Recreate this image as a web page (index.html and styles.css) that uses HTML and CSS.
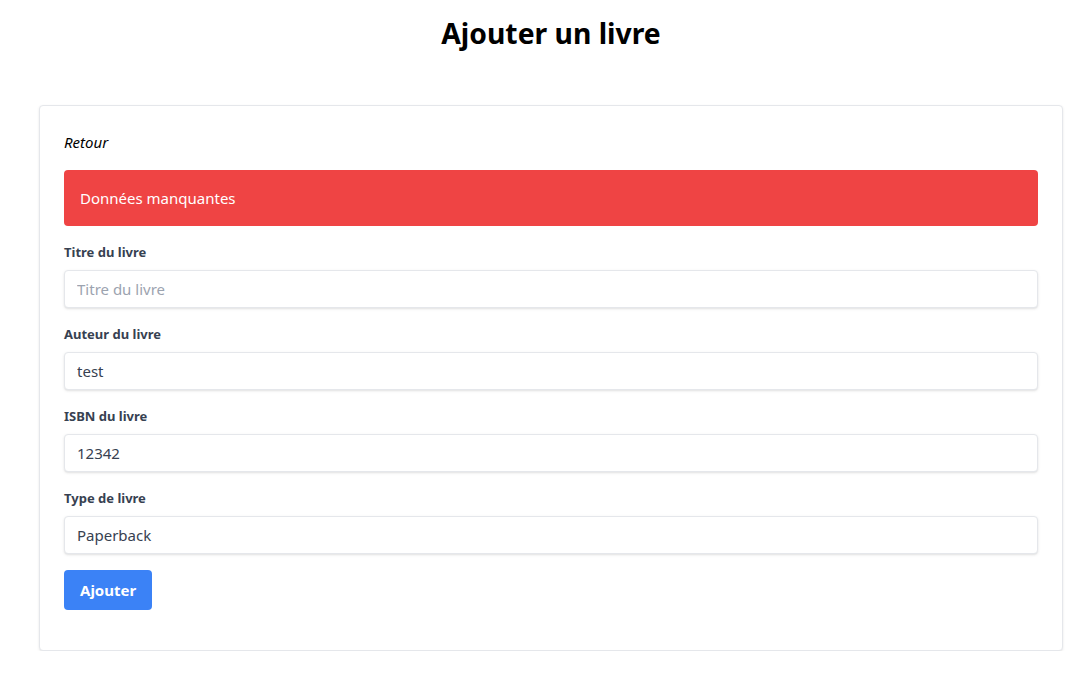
FILE: index.html
```html
<!DOCTYPE html>
<html lang="fr">
<head>
<meta charset="utf-8">
<title>Ajouter un livre</title>
<link rel="stylesheet" href="styles.css">
</head>
<body>
<div class="page">
  <h1 class="title">Ajouter un livre</h1>
  <div class="card">
    <a class="back" href="#">Retour</a>
    <div class="alert">Données manquantes</div>
    <form class="form">
      <div class="field">
        <label class="label" for="titre">Titre du livre</label>
        <input class="input" id="titre" type="text" placeholder="Titre du livre">
      </div>
      <div class="field">
        <label class="label" for="auteur">Auteur du livre</label>
        <input class="input" id="auteur" type="text" value="test">
      </div>
      <div class="field">
        <label class="label" for="isbn">ISBN du livre</label>
        <input class="input" id="isbn" type="text" value="12342">
      </div>
      <div class="field">
        <label class="label" for="type">Type de livre</label>
        <input class="input" id="type" type="text" value="Paperback">
      </div>
      <div class="actions">
        <button class="btn" type="button">Ajouter</button>
      </div>
    </form>
  </div>
</div>
</body>
</html>
```
FILE: styles.css
```css
* { box-sizing: border-box; }
html, body {
  margin: 0;
  padding: 0;
  background: #ffffff;
  font-family: "Segoe UI", "Noto Sans", "Open Sans", sans-serif;
  color: #000;
}
.page {
  width: 1024px;
  margin-left: 39px;
}
.title {
  margin: 15px 0 54px;
  font-size: 28.3px;
  line-height: 36px;
  font-weight: 700;
  text-align: center;
}
.card {
  border: 1px solid #e5e7eb;
  border-radius: 4px;
  box-shadow: 0 1px 3px 0 rgba(0,0,0,0.08), 0 1px 2px -1px rgba(0,0,0,0.08);
  padding: 24px 24px 24px;
  background: #fff;
}
.back {
  display: block;
  font-style: italic;
  font-size: 15px;
  line-height: 24px;
  color: #000;
  text-decoration: none;
  margin-bottom: 16px;
}
.alert {
  background: #ef4444;
  color: #fff;
  border-radius: 4px;
  padding: 16px;
  font-size: 15px;
  line-height: 24px;
  margin-bottom: 16px;
}
.form { margin: 0 0 16px; }
.field { margin-bottom: 16px; }
.label {
  display: block;
  font-size: 13px;
  line-height: 20px;
  font-weight: 700;
  color: #374151;
  margin-bottom: 8px;
}
.input {
  display: block;
  width: 100%;
  height: 38px;
  border: 1px solid #e5e7eb;
  border-radius: 4px;
  box-shadow: 0 1px 3px 0 rgba(0,0,0,0.1), 0 1px 2px -1px rgba(0,0,0,0.1);
  padding: 8px 12px;
  font-family: inherit;
  font-size: 15px;
  line-height: 20px;
  color: #374151;
  background: #fff;
  outline: none;
}
.input::placeholder { color: #9ca3af; }
.actions { display: flex; }
.btn {
  background: #3b82f6;
  color: #fff;
  border: none;
  border-radius: 4px;
  padding: 8px 16px;
  font-family: inherit;
  font-size: 15px;
  line-height: 24px;
  font-weight: 700;
  cursor: pointer;
}
```
